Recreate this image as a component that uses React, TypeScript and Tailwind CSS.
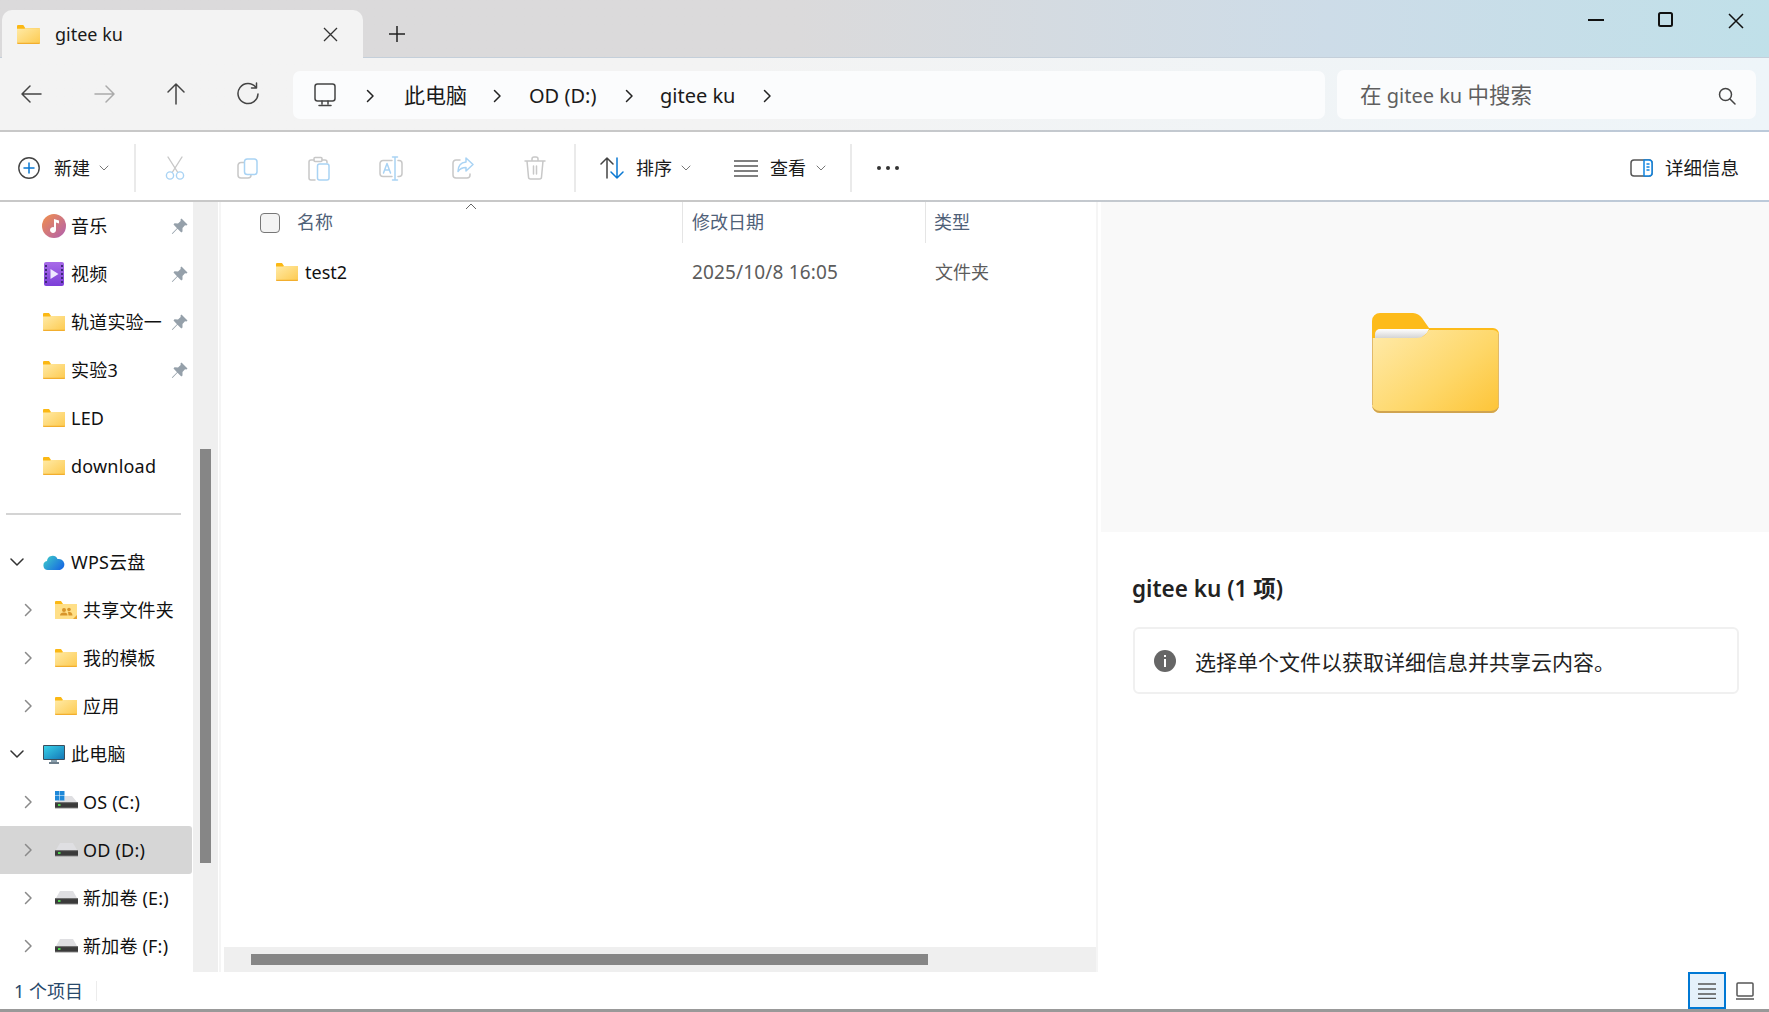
import React from "react";

const S = { fill: "none", strokeLinecap: "round" as const, strokeLinejoin: "round" as const };

function Folder({ w = 22, h = 18 }: { w?: number; h?: number }) {
  const id = "f" + w;
  return (
    <svg width={w} height={h} viewBox="0 0 22 18" className="shrink-0">
      <defs>
        <linearGradient id={id} x1="0" y1="0" x2="1" y2="1">
          <stop offset="0" stopColor="#ffeaa6" />
          <stop offset="1" stopColor="#fdca4f" />
        </linearGradient>
      </defs>
      <path d="M0 1a1 1 0 0 1 1-1h5l2 3h13a1 1 0 0 1 1 1v3H0z" fill="#fbb814" />
      <path d="M0 3.500h7l1-.5h14v14a1 1 0 0 1-1 1H1a1 1 0 0 1-1-1z" fill={`url(#${id})`} />
      <path d="M0 16.800h22V17a1 1 0 0 1-1 1H1a1 1 0 0 1-1-1z" fill="#f2ae2e" />
    </svg>
  );
}

function BigFolder() {
  return (
    <svg width="127" height="100" viewBox="0 0 127 100" className="shrink-0">
      <defs>
        <linearGradient id="big" x1="0" y1="0.100" x2="1" y2="0.900">
          <stop offset="0" stopColor="#ffe9a6" />
          <stop offset="0.600" stopColor="#fed768" />
          <stop offset="1" stopColor="#fdc63c" />
        </linearGradient>
        <linearGradient id="paper" x1="0" y1="0" x2="0" y2="1">
          <stop offset="0" stopColor="#ffffff" />
          <stop offset="1" stopColor="#d4d4d4" />
        </linearGradient>
      </defs>
      <path d="M0 8a8 8 0 0 1 8-8h33a12 12 0 0 1 9 5l7 10h64a6 6 0 0 1 6 6v20H0z" fill="#fdbb1a" />
      <path d="M3 21a5 5 0 0 1 5-5h49l-2 4-6 5H3z" fill="url(#paper)" />
      <path d="M0 25h44c4 0 7-1 10-4l3-4h64a6 6 0 0 1 6 6v69a8 8 0 0 1-8 8H8a8 8 0 0 1-8-8z" fill="url(#big)" />
      <path d="M0 92v-1c0 4 4 7 8 7h111c4 0 8-3 8-7v1a8 8 0 0 1-8 8H8a8 8 0 0 1-8-8z" fill="#d0a450" />
      <path d="M0.500 25v67M126.500 21v71" stroke="#e1ba6a" strokeWidth="1" />
    </svg>
  );
}

function Chevron({ dir = "right", c = "#888", s = 14 }: { dir?: "right" | "down"; c?: string; s?: number }) {
  return (
    <svg width={s} height={s} viewBox="0 0 14 14" className="shrink-0" {...S} stroke={c} strokeWidth="1.500">
      {dir === "right" ? <path d="M4.500 1.500 10 7l-5.500 5.500" /> : <path d="M1 4l6 6 6-6" />}
    </svg>
  );
}

function Tiny() {
  return (
    <svg width="10" height="8" viewBox="0 0 10 8" className="shrink-0" {...S} stroke="#777" strokeWidth="1">
      <path d="M1 2l4 4 4-4" />
    </svg>
  );
}

function Pin() {
  return (
    <svg width="17" height="17" viewBox="0 0 17 17" className="shrink-0">
      <path d="M10.500 0.500 16.500 6.500 15.500 7.500 14 7.300 11.500 10 11.500 13.500 10.300 14.500 6.500 10.700 1.500 16 0.800 15.500 6 10.200 2.500 6.500 3.500 5.300 7 5.400 9.700 3 9.500 1.500z" fill="#95a0aa" />
    </svg>
  );
}

function Drive({ win = false }: { win?: boolean }) {
  const id = win ? "dw" : "dn";
  return (
    <svg width="23" height="22" viewBox="0 0 23 22" className="shrink-0">
      <defs>
        <linearGradient id={id} x1="0" y1="0" x2="0" y2="1">
          <stop offset="0" stopColor="#8a8a8a" />
          <stop offset="0.250" stopColor="#3a3a3a" />
          <stop offset="0.750" stopColor="#3a3a3a" />
          <stop offset="1" stopColor="#8f8f8f" />
        </linearGradient>
      </defs>
      <path d={win ? "M10 5h7l5 6H1l3-2h6z" : "M5 4h13l4 7H1z"} fill="#dfdfe2" />
      {win && (
        <g fill="#1e88d8">
          <rect x="0" y="0" width="4.500" height="4.500" />
          <rect x="5" y="0" width="4.500" height="4.500" />
          <rect x="0" y="5" width="4.500" height="4.500" />
          <rect x="5" y="5" width="4.500" height="4.500" />
        </g>
      )}
      <rect x="0" y="11" width="23" height="6.500" fill={`url(#${id})`} />
      <rect x="3" y="13" width="2.500" height="2" fill="#4cd24c" />
    </svg>
  );
}

function Row({ children, icon, pin, exp, selected, sub }: { children: React.ReactNode; icon: React.ReactNode; pin?: boolean; exp?: "right" | "down"; selected?: boolean; sub?: boolean }) {
  return (
    <div className={`mr-px flex h-12 items-center rounded-r-[3px] text-[18px] tracking-[0.2px] text-[#111] ${selected ? "bg-[#d6d6d6]" : ""}`}>
      {sub ? (
        <div className="flex w-[55px] shrink-0 justify-center pl-[2px] pr-0"><div className="mr-[2px]"><Chevron c="#8a8a8a" /></div></div>
      ) : exp ? (
        <div className="flex w-[43px] shrink-0 justify-start pl-[10px]"><Chevron dir="down" c="#333" /></div>
      ) : (
        <div className="w-[43px] shrink-0" />
      )}
      <div className="flex w-[22px] shrink-0 items-center justify-center">{icon}</div>
      <div className="ml-[6px] flex-1 whitespace-nowrap">{children}</div>
      {pin && <div className="mr-[4px]"><Pin /></div>}
    </div>
  );
}

function Sidebar() {
  return (
    <div className="w-[193px] shrink-0 overflow-hidden">
      <Row pin icon={
        <svg width="24" height="24" viewBox="0 0 24 24" className="shrink-0">
          <defs><linearGradient id="mu" x1="0" y1="0" x2="1" y2="1"><stop offset="0" stopColor="#f2904a" /><stop offset="1" stopColor="#b05fb0" /></linearGradient></defs>
          <circle cx="12" cy="12" r="12" fill="url(#mu)" />
          <path d="M12 5l5 1.500v3L14 8.500V16a3 3 0 1 1-2-2.800z" fill="#fff" />
        </svg>}>音乐</Row>
      <Row pin icon={
        <svg width="20" height="24" viewBox="0 0 20 24" className="shrink-0">
          <defs><linearGradient id="vi" x1="0" y1="0" x2="0" y2="1"><stop offset="0" stopColor="#a86be8" /><stop offset="1" stopColor="#7c3fd8" /></linearGradient></defs>
          <rect width="20" height="24" rx="2" fill="url(#vi)" />
          <path d="M1 3h2v2H1zM1 7h2v2H1zM1 11h2v2H1zM1 15h2v2H1zM1 19h2v2H1zM17 3h2v2h-2zM17 7h2v2h-2zM17 11h2v2h-2zM17 15h2v2h-2zM17 19h2v2h-2z" fill="#3f2a7a" />
          <path d="M6.500 7l8 5-8 5z" fill="#eee8ff" />
        </svg>}>视频</Row>
      <Row pin icon={<Folder />}>轨道实验一</Row>
      <Row pin icon={<Folder />}>实验3</Row>
      <Row icon={<Folder />}>LED</Row>
      <Row icon={<Folder />}>download</Row>
      <div className="flex h-12 items-center pl-[6px]"><div className="h-[2px] w-[175px] bg-[#d4d4d4]" /></div>
      <Row exp="down" icon={
        <svg width="22" height="16" viewBox="0 0 22 16" className="shrink-0">
          <defs><linearGradient id="cl" x1="0" y1="0" x2="1" y2="0.600"><stop offset="0" stopColor="#3fd0c8" /><stop offset="1" stopColor="#1a6fe0" /></linearGradient></defs>
          <path d="M5 16a4.500 4.500 0 0 1-1-8.900 5.500 5.500 0 0 1 10.500-2A5.500 5.500 0 0 1 17 16z" fill="url(#cl)" />
        </svg>}>WPS云盘</Row>
      <Row sub icon={
        <svg width="22" height="18" viewBox="0 0 22 18" className="shrink-0">
          <path d="M0 1a1 1 0 0 1 1-1h5l2 3h14v4H0z" fill="#fbb814" />
          <rect y="3" width="22" height="15" fill="#ffdf87" />
          <circle cx="9" cy="9" r="2" fill="#d8952a" /><circle cx="14" cy="8.500" r="1.800" fill="#d8952a" />
          <path d="M5 14.500c0-2 1.500-3 4-3s3.500 1 3.500 3zM13 10.800c2.500 0 4.500 1 4.500 3.700H13.500z" fill="#d8952a" />
          <path d="M22 14l-4 4h4z" fill="#e8a530" />
        </svg>}>共享文件夹</Row>
      <Row sub icon={<Folder />}>我的模板</Row>
      <Row sub icon={<Folder />}>应用</Row>
      <Row exp="down" icon={
        <svg width="22" height="19" viewBox="0 0 22 19" className="shrink-0">
          <defs><linearGradient id="mon" x1="0" y1="0" x2="1" y2="1"><stop offset="0" stopColor="#38d0e8" /><stop offset="1" stopColor="#1478b8" /></linearGradient></defs>
          <rect width="22" height="15" rx="1" fill="#3b4d5c" />
          <rect x="1" y="1" width="20" height="13" fill="url(#mon)" />
          <rect x="8" y="15" width="6" height="2" fill="#8ba0ad" />
          <rect x="6" y="17" width="10" height="2" fill="#6d7f8c" />
        </svg>}>此电脑</Row>
      <Row sub icon={<Drive win />}>OS (C:)</Row>
      <Row sub selected icon={<Drive />}>OD (D:)</Row>
      <Row sub icon={<Drive />}>新加卷 (E:)</Row>
      <Row sub icon={<Drive />}>新加卷 (F:)</Row>
    </div>
  );
}

function ToolSlot({ children }: { children: React.ReactNode }) {
  return <div className="flex w-[72px] shrink-0 items-center justify-center">{children}</div>;
}
const GY = "#c8c8c8";
const BL = "#a9d3f4";

function Toolbar() {
  return (
    <div className="flex h-[68px] items-center bg-white pt-[4px] text-[18px] text-[#1a1a1a]">
      <div className="ml-[18px]">
        <svg width="22" height="22" viewBox="0 0 22 22" {...S}>
          <circle cx="11" cy="11" r="10.200" stroke="#444" strokeWidth="1.400" />
          <path d="M11 6v10M6 11h10" stroke="#0a78d2" strokeWidth="1.500" />
        </svg>
      </div>
      <span className="ml-[14px] w-[36px] whitespace-nowrap">新建</span>
      <div className="ml-[9px]"><Tiny /></div>
      <div className="ml-[25px] h-12 w-[2px] bg-[#eaeaea]" />
      <div className="ml-[3px] flex">
        <ToolSlot>
          <svg width="22" height="24" viewBox="0 0 22 24" {...S} strokeWidth="1.400">
            <path d="M4 1l9.500 15M18 1L8.500 16" stroke={GY} />
            <circle cx="6" cy="19.500" r="3.600" stroke={BL} /><circle cx="16" cy="19.500" r="3.600" stroke={BL} />
          </svg>
        </ToolSlot>
        <ToolSlot>
          <svg width="21" height="21" viewBox="0 0 21 21" {...S} strokeWidth="1.500">
            <path d="M7 4.500H4a3 3 0 0 0-3 3v9.500a3 3 0 0 0 3 3h7a3 3 0 0 0 3-3" stroke={GY} />
            <rect x="7.500" y="1" width="12.500" height="15.500" rx="2.800" stroke={BL} />
          </svg>
        </ToolSlot>
        <ToolSlot>
          <svg width="22" height="25" viewBox="0 0 22 25" {...S} strokeWidth="1.500">
            <path d="M6 4H3a2 2 0 0 0-2 2v16a2 2 0 0 0 2 2h4M14 4h3a2 2 0 0 1 2 2v1" stroke={GY} />
            <rect x="6" y="1.500" width="8" height="4" rx="1" stroke={GY} />
            <rect x="9.500" y="8" width="11.500" height="16" rx="2" stroke={BL} />
          </svg>
        </ToolSlot>
        <ToolSlot>
          <svg width="24" height="25" viewBox="0 0 24 25" {...S} strokeWidth="1.500">
            <path d="M13 4.500H4a3 3 0 0 0-3 3v10a3 3 0 0 0 3 3h9M19 4.500h1a3 3 0 0 1 3 3v10a3 3 0 0 1-3 3h-1" stroke={GY} />
            <path d="M16 1v23M13.500 1h5M13.500 24h5" stroke={BL} />
            <path d="M4.500 17l3.500-9.500 3.500 9.500M5.800 14h4.400" stroke={BL} />
          </svg>
        </ToolSlot>
        <ToolSlot>
          <svg width="22" height="22" viewBox="0 0 22 22" {...S} strokeWidth="1.500">
            <path d="M8 3H4a3 3 0 0 0-3 3v12a3 3 0 0 0 3 3h11a3 3 0 0 0 3-3v-1" stroke={GY} />
            <path d="M14 1l7 6.500-7 6.500v-3.500c-3.500 0-6 1-8 4 0-5.500 3-9 8-9.500z" stroke={BL} />
          </svg>
        </ToolSlot>
        <ToolSlot>
          <svg width="22" height="24" viewBox="0 0 22 24" {...S} strokeWidth="1.500" stroke={GY}>
            <path d="M1 5h20M8 5V3a2 2 0 0 1 2-2h2a2 2 0 0 1 2 2v2M3 5l1.500 16a2 2 0 0 0 2 2h9a2 2 0 0 0 2-2L19 5M9.500 10v8M12.500 10v8" />
          </svg>
        </ToolSlot>
      </div>
      <div className="ml-[3px] h-12 w-[2px] bg-[#eaeaea]" />
      <div className="ml-[24px]">
        <svg width="24" height="24" viewBox="0 0 24 24" {...S} strokeWidth="1.500">
          <path d="M7 22V2M1 8l6-6 6 6" stroke="#444" />
          <path d="M17 2v20M11 16l6 6 6-6" stroke="#0a78d2" />
        </svg>
      </div>
      <span className="ml-[12px] w-[36px] whitespace-nowrap">排序</span>
      <div className="ml-[9px]"><Tiny /></div>
      <div className="ml-[43px]">
        <svg width="24" height="18" viewBox="0 0 24 18" stroke="#555" strokeWidth="1.500">
          <path d="M0 2h24M0 7h24M0 12h24M0 17h24" />
        </svg>
      </div>
      <span className="ml-[12px] w-[36px] whitespace-nowrap">查看</span>
      <div className="ml-[10px]"><Tiny /></div>
      <div className="ml-[24px] h-12 w-[2px] bg-[#eaeaea]" />
      <div className="ml-[25px] flex gap-[5px]">
        <div className="h-1 w-1 rounded-full bg-[#333]" />
        <div className="h-1 w-1 rounded-full bg-[#333]" />
        <div className="h-1 w-1 rounded-full bg-[#333]" />
      </div>
      <div className="ml-auto flex items-center pr-[30px]">
        <svg width="23" height="18" viewBox="0 0 23 18" {...S} strokeWidth="1.500">
          <rect x="1" y="1" width="21" height="16" rx="3" stroke="#555" />
          <path d="M14 1h5a3 3 0 0 1 3 3v10a3 3 0 0 1-3 3h-5z" stroke="#1084e0" fill="#fff" />
          <path d="M17 5h2M17 8h2M17 11h2" stroke="#1084e0" />
        </svg>
        <span className="ml-[12px] whitespace-nowrap text-[18.500px]">详细信息</span>
      </div>
    </div>
  );
}

function NavBar() {
  const arrow = (d: string, c: string) => (
    <svg width="24" height="24" viewBox="0 0 24 24" className="shrink-0" {...S} stroke={c} strokeWidth="1.500"><path d={d} /></svg>
  );
  return (
    <div className="flex h-[72px] items-center bg-gradient-to-r from-[#f3f3f3] from-40% to-[#eef5f9] pl-[20px] text-[#1a1a1a]">
      {arrow("M21 12H3M10 4l-8 8 8 8", "#444")}
      <div className="ml-[48px]">{arrow("M3 12h18M14 4l8 8-8 8", "#aaa")}</div>
      <div className="ml-[48px]">{arrow("M12 22V3M4 10l8-8 8 8", "#444")}</div>
      <div className="ml-[48px]">
        <svg width="24" height="24" viewBox="0 0 24 24" {...S} stroke="#444" strokeWidth="1.500"><path d="M20 5.500A10 10 0 1 0 22 12M20.500 1v5h-5" /></svg>
      </div>
      <div className="ml-[33px] mt-[2px] flex h-12 w-[1032px] shrink-0 items-center rounded-[7px] bg-[#fbfcfd] pl-[20px] pt-[2px] text-[20px]">
        <svg width="24" height="24" viewBox="0 0 24 24" className="-mt-[2px] shrink-0" {...S} stroke="#444" strokeWidth="1.500">
          <rect x="2" y="1" width="20" height="17" rx="2.500" /><path d="M9 18v3M15 18v3M6 22.500h12" />
        </svg>
        <div className="ml-[26px]"><Chevron c="#222" /></div>
        <span className="ml-[27px] w-[63px] whitespace-nowrap text-[21px]">此电脑</span>
        <div className="ml-[23px]"><Chevron c="#222" /></div>
        <span className="ml-[25px] w-[68px] whitespace-nowrap">OD (D:)</span>
        <div className="ml-[25px]"><Chevron c="#222" /></div>
        <span className="ml-[24px] w-[75px] whitespace-nowrap">gitee ku</span>
        <div className="ml-[25px]"><Chevron c="#222" /></div>
      </div>
      <div className="ml-[12px] flex h-[49px] w-[419px] shrink-0 items-center justify-between rounded-[7px] bg-[#fbfcfd] pl-[23px] pr-[20px] pt-[3px] text-[20px] text-[#5f5f5f]">
        <span className="whitespace-nowrap"><span className="text-[21.500px]">在</span> gitee ku <span className="text-[21.500px]">中搜索</span></span>
        <svg width="18" height="18" viewBox="0 0 18 18" {...S} stroke="#444" strokeWidth="1.500">
          <circle cx="7.500" cy="7.500" r="6" /><path d="M12 12l5 5" />
        </svg>
      </div>
    </div>
  );
}

function TitleBar() {
  return (
    <div className="flex h-[58px] items-stretch border-b-[1px] border-[#c4cfda] bg-gradient-to-r from-[#dbdadb] from-45% via-[#cddce8] via-75% to-[#c0e0e9]">
      <div className="ml-[2px] mt-[10px] -mb-px flex w-[361px] shrink-0 items-center rounded-t-[10px] bg-[#f3f3f3] pl-[15px]">
        <Folder w={23} h={19} />
        <span className="ml-[15px] text-[18px] text-[#1a1a1a]">gitee ku</span>
        <svg className="ml-auto mr-[25px]" width="15" height="15" viewBox="0 0 15 15" stroke="#333" strokeWidth="1.300"><path d="M1 1l13 13M14 1L1 14" /></svg>
      </div>
      <div className="ml-[26px] mt-[10px] flex items-center">
        <svg width="16" height="16" viewBox="0 0 16 16" stroke="#222" strokeWidth="1.500"><path d="M8 0v16M0 8h16" /></svg>
      </div>
      <div className="ml-auto flex items-start pr-[25px] pt-[12px]">
        <svg className="mt-[7px]" width="16" height="2" viewBox="0 0 16 2" stroke="#111" strokeWidth="2"><path d="M0 1h16" /></svg>
        <svg className="ml-[54px]" width="15" height="15" viewBox="0 0 15 15" fill="none" stroke="#111" strokeWidth="2"><rect x="1" y="1" width="13" height="13" rx="1.500" /></svg>
        <svg className="ml-[55px] mt-px" width="16" height="16" viewBox="0 0 16 16" stroke="#111" strokeWidth="1.500"><path d="M1 1l14 14M15 1L1 15" /></svg>
      </div>
    </div>
  );
}

function FileList() {
  return (
    <div className="ml-[1px] flex min-w-0 flex-1 flex-col border-r-[2px] border-l-[2px] border-r-[#f5f5f5] border-l-[#f5f5f5]">
      <div className="relative flex h-[41px] shrink-0 text-[18px] text-[#4f6178]">
        <div className="flex w-[462px] shrink-0 items-center border-r-[1px] border-[#e5e5e5] pl-[39px]">
          <div className="h-[20px] w-[20px] rounded-[4px] border-[1.500px] border-[#777] bg-[#f3f3f3]" />
          <span className="ml-[17px] whitespace-nowrap">名称</span>
          <svg className="absolute left-[244px] top-[1px]" width="12" height="7" viewBox="0 0 12 7" fill="none" stroke="#666" strokeWidth="1"><path d="M1 6l5-5 5 5" /></svg>
        </div>
        <div className="flex w-[243px] shrink-0 items-center border-r-[1px] border-[#e5e5e5] pl-[9px]">修改日期</div>
        <div className="flex items-center pl-[8px]">类型</div>
      </div>
      <div className="mt-[5px] flex h-12 shrink-0 items-center text-[18px]">
        <div className="flex w-[463px] shrink-0 items-center pl-[55px]">
          <Folder />
          <span className="ml-[7px] text-[#111]">test2</span>
        </div>
        <div className="w-[243px] shrink-0 pl-[8px] text-[19px] tracking-[0.150px] text-[#5c5c5c]">2025/10/8 16:05</div>
        <div className="pl-[8px] text-[#5c5c5c]">文件夹</div>
      </div>
      <div className="flex-1" />
      <div className="ml-[3px] flex h-[25px] shrink-0 items-center bg-[#efefef] pl-[27px]">
        <div className="h-[11px] w-[677px] bg-[#868686]" />
      </div>
    </div>
  );
}

function Details() {
  return (
    <div className="ml-[3px] w-[668px] shrink-0 bg-white">
      <div className="flex h-[330px] justify-center bg-[#f9f9f9] pt-[111px]"><BigFolder /></div>
      <div className="ml-[31px] mt-[43px] h-7 whitespace-nowrap text-[22.500px] font-semibold leading-7 text-[#222]">gitee ku (1 项)</div>
      <div className="ml-[32px] mt-[24px] flex h-[67px] w-[606px] items-center rounded-[6px] border-2 border-[#f0f0f0] pl-[19px] text-[21px] text-[#222]">
        <div className="flex h-[22px] w-[22px] shrink-0 items-center justify-center rounded-full bg-[#666]">
          <svg width="4" height="12" viewBox="0 0 4 12" fill="#fff"><rect x="1" y="0" width="2" height="2" /><rect x="1" y="4" width="2" height="8" /></svg>
        </div>
        <span className="ml-[19px] mt-[4px] whitespace-nowrap">选择单个文件以获取详细信息并共享云内容。</span>
      </div>
    </div>
  );
}

export default function App() {
  return (
    <div className="flex h-[1012px] w-[1769px] flex-col overflow-hidden bg-white [font-family:'Noto_Sans','Noto_Sans_CJK_SC',sans-serif]">
      <TitleBar />
      <NavBar />
      <div className="h-[2px] shrink-0 bg-gradient-to-r from-[#c8c8c8] from-40% to-[#bccada]" />
      <Toolbar />
      <div className="h-[2px] shrink-0 bg-gradient-to-r from-[#c8c8c8] from-40% to-[#bccada]" />
      <div className="flex h-[770px] shrink-0">
        <Sidebar />
        <div className="w-[25px] shrink-0 bg-[#efefef] pl-[7px] pt-[247px]">
          <div className="h-[414px] w-[11px] bg-[#868686]" />
        </div>
        <FileList />
        <Details />
      </div>
      <div className="flex h-[37px] shrink-0 items-center pl-[14px] text-[18px] text-[#28496b]">
        <span className="mt-[2px] whitespace-nowrap">1 个项目</span>
        <div className="ml-[13px] h-[20px] w-px bg-[#ececec]" />
        <div className="ml-auto flex items-center pr-[15px]">
          <div className="flex h-[37px] w-[38px] items-center justify-center border-2 border-[#0078d4] bg-[#e5f1fb]">
            <svg width="18" height="16" viewBox="0 0 18 16" stroke="#555" strokeWidth="1.500"><path d="M0 1h18M0 6h18M0 11h18M0 15.500h18" /></svg>
          </div>
          <svg className="ml-[10px]" width="18" height="18" viewBox="0 0 18 18" fill="none" stroke="#555" strokeWidth="1.500"><rect x="1" y="1" width="16" height="13" rx="1" /><path d="M0 17h18" /></svg>
        </div>
      </div>
      <div className="h-[3px] shrink-0 bg-[#999]" />
    </div>
  );
}
